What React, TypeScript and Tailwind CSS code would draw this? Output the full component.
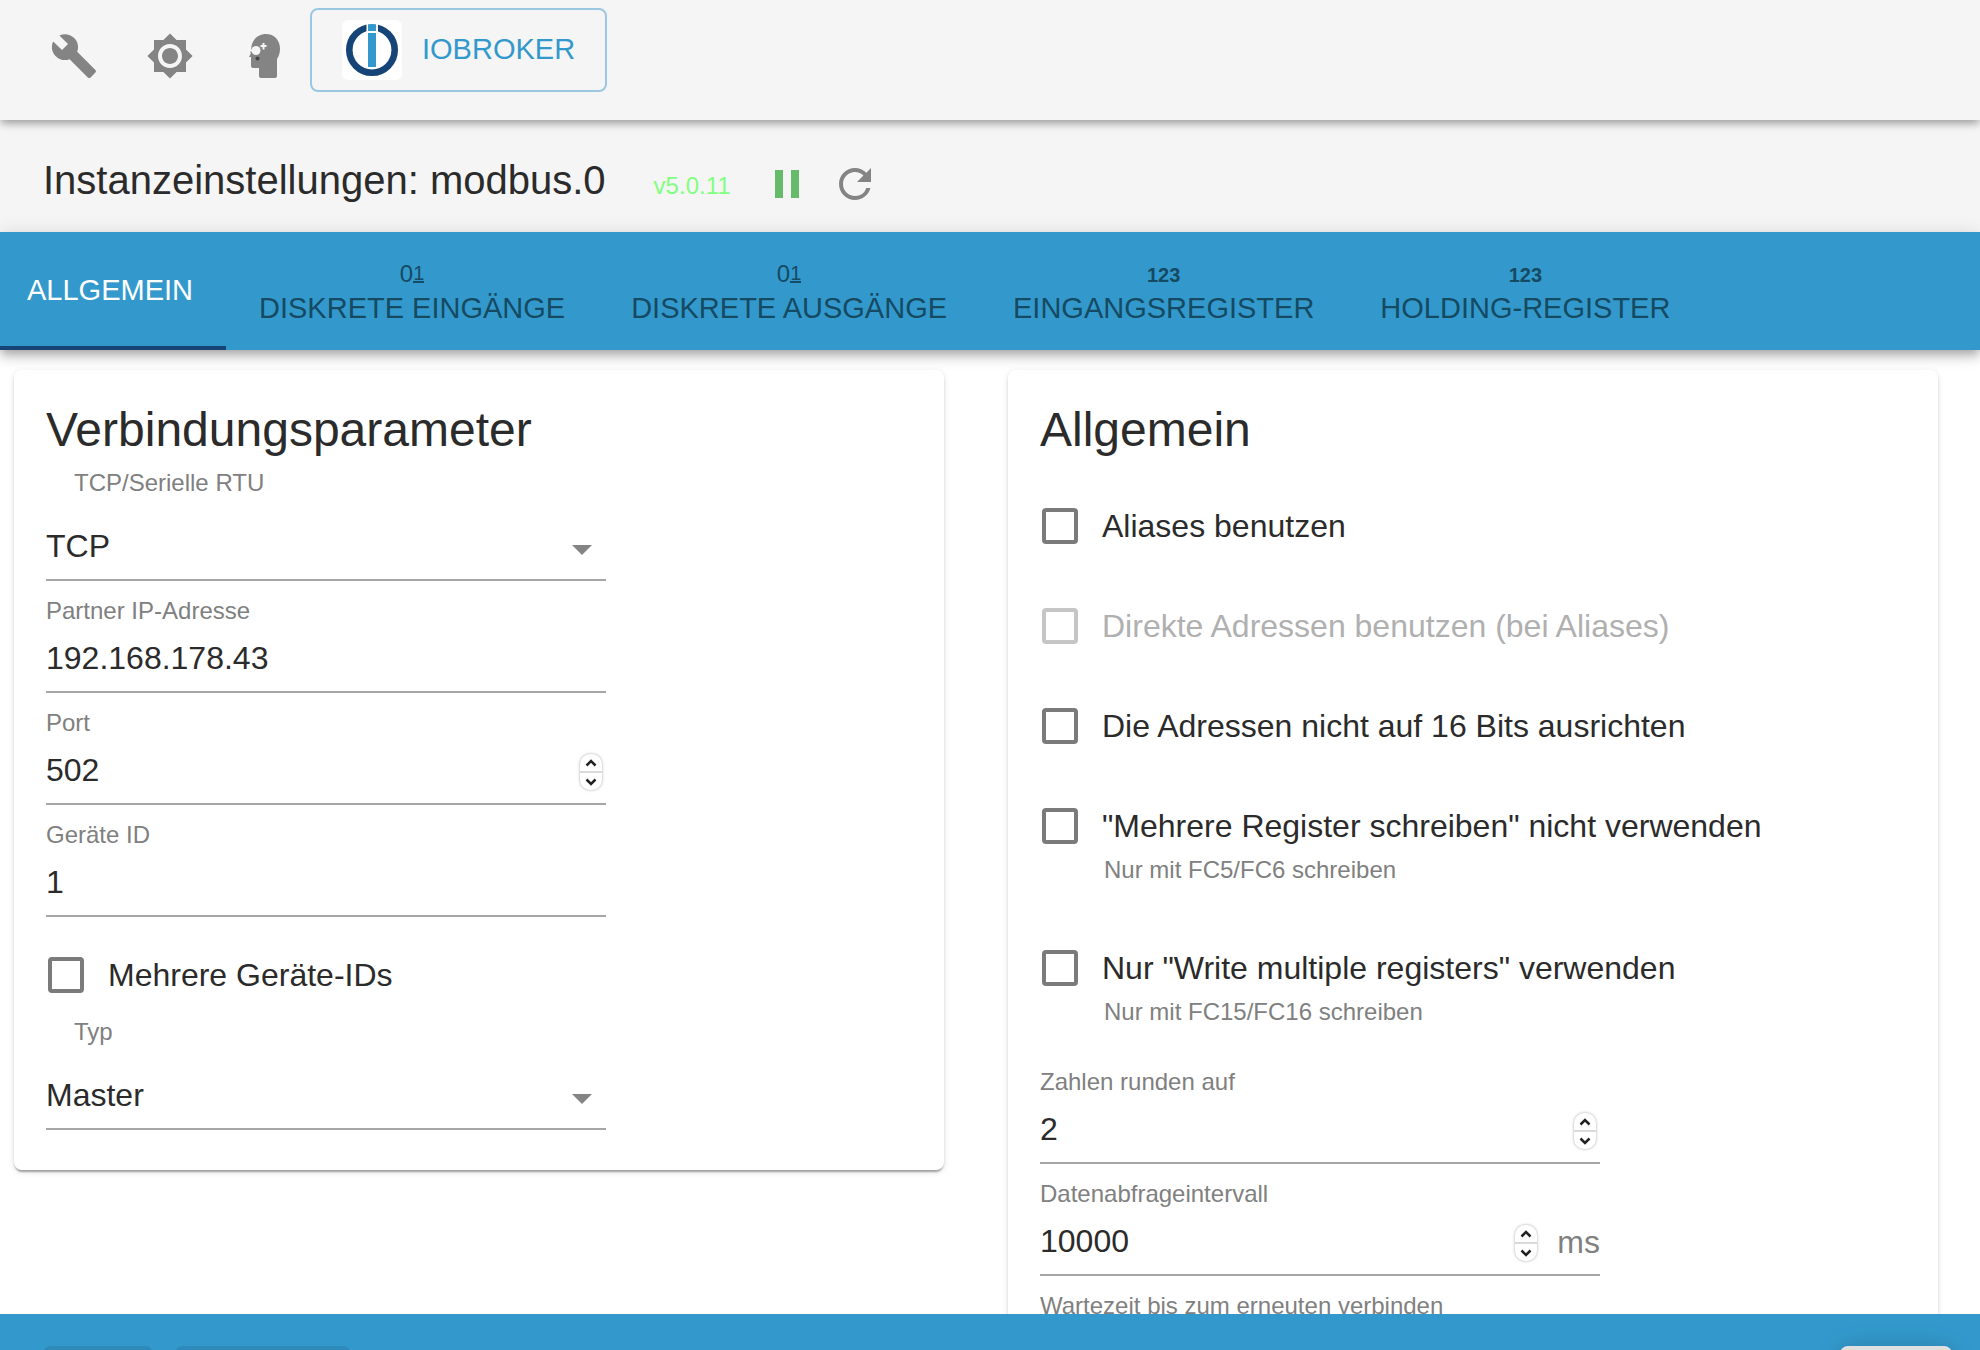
import React, { useId, useState } from 'react';
import { MdArrowDropDown, MdBrightness7, MdBuild, MdPause, MdRefresh } from 'react-icons/md';
import { clsx } from 'clsx';

const HeadIcon: React.FC = () => (
  <svg viewBox="0 0 48 48" className="w-12 h-12">
    <path
      fill="currentColor"
      d="M24 2C15.500 2 10 8 9.300 15.500L9.300 17L8 20L9 21L7 25H9V34Q9 36 11 36H17V44Q17 46 19 46H33Q35 46 35 44V27C37 24 38 20.500 38 16.500C38 8 32 2 24 2Z"
    />
    <circle cx="14" cy="18.500" r="4.500" fill="#f5f5f5" />
    <path d="M8 17.500h4v2H8z" fill="#f5f5f5" />
    <path d="M20.500 11h2v2h2v2h-2v2.500h-2V15h-2v-2h2z" fill="#f5f5f5" />
    <circle cx="15.500" cy="26.500" r="2" fill="#444444" />
  </svg>
);

const Logo: React.FC = () => (
  <svg viewBox="0 0 60 60" className="w-15 h-15 rounded-md bg-white">
    <circle cx="30" cy="30" r="22.700" fill="none" stroke="#164477" strokeWidth="6.600" />
    <path d="M24.500 2h11.500v10h-11.500z" fill="#ffffff" />
    <path d="M26 4.300q4 -.6 8 0v6.700h-8zM26 13h8v34h-8z" fill="#3399cc" />
  </svg>
);

const BinaryIcon: React.FC = () => (
  <span className="flex h-8 items-center justify-center text-2xl">
    0<span className="border-b-2 border-current text-xl leading-4">1</span>
  </span>
);

const NumberIcon: React.FC = () => (
  <span className="flex h-8 items-center justify-center pt-0.5 text-xl font-bold">123</span>
);

const TABS = [
  { label: 'ALLGEMEIN' },
  { label: 'DISKRETE EINGÄNGE', icon: <BinaryIcon /> },
  { label: 'DISKRETE AUSGÄNGE', icon: <BinaryIcon /> },
  { label: 'EINGANGSREGISTER', icon: <NumberIcon /> },
  { label: 'HOLDING-REGISTER', icon: <NumberIcon /> },
];

const Card: React.FC<{ title: string; children: React.ReactNode }> = ({ title, children }) => (
  <section className="rounded-lg bg-white px-8 pt-8 pb-10 shadow-[0_4px_2px_-2px_rgba(0,0,0,0.2),0_2px_2px_rgba(0,0,0,0.14),0_2px_6px_rgba(0,0,0,0.12)]">
    <h2 className="text-5xl leading-14">{title}</h2>
    {children}
  </section>
);

const SelectField: React.FC<{ label: string; options: string[] }> = ({ label, options }) => {
  const id = useId();
  return (
    <div className="max-w-[560px] pt-[11px]">
      <label htmlFor={id} className="block pl-7 text-2xl leading-7 text-[#808080]">
        {label}
      </label>
      <div className="relative mt-4">
        <select
          id={id}
          className="block h-17 w-full appearance-none border-b-2 border-[#a6a6a6] bg-transparent text-[32px] outline-none"
        >
          {options.map((o) => (
            <option key={o}>{o}</option>
          ))}
        </select>
        <MdArrowDropDown className="pointer-events-none absolute top-3 right-0 size-12 text-[#848484]" />
      </div>
    </div>
  );
};

const Chevron: React.FC<{ down?: boolean }> = ({ down }) => (
  <svg viewBox="0 0 12 8" className={clsx('h-2 w-3', down && 'rotate-180')}>
    <path d="M1.500 6.500L6 2L10.500 6.500" fill="none" stroke="#222222" strokeWidth="2.500" />
  </svg>
);

interface TextFieldProps {
  label: string;
  value: string;
  stepper?: boolean;
  unit?: string;
}

const TextField: React.FC<TextFieldProps> = ({ label, value: initial, stepper, unit }) => {
  const id = useId();
  const [value, setValue] = useState(initial);
  return (
    <div className="max-w-[560px] pt-4">
      <label htmlFor={id} className="block text-2xl leading-7 text-[#808080]">
        {label}
      </label>
      <div className="flex h-17 items-center border-b-2 border-[#a6a6a6]">
        <input
          id={id}
          type="text"
          inputMode={stepper ? 'numeric' : undefined}
          value={value}
          onChange={(e) => setValue(e.target.value)}
          className="h-full min-w-0 flex-1 bg-transparent text-[32px] outline-none"
        />
        {stepper && (
          <div className="mt-1 mr-1 flex h-9 w-[22px] flex-col divide-y-2 divide-[#dadada] rounded-[10px] bg-white shadow-[0_0_3px_rgba(0,0,0,0.35)]">
            <button
              aria-label="Erhöhen"
              onClick={() => setValue(String(Number(value) + 1))}
              className="flex flex-1 items-center justify-center"
            >
              <Chevron />
            </button>
            <button
              aria-label="Verringern"
              onClick={() => setValue(String(Number(value) - 1))}
              className="flex flex-1 items-center justify-center"
            >
              <Chevron down />
            </button>
          </div>
        )}
        {unit && <span className="pt-0.5 pl-4 text-[32px] text-[#808080]">{unit}</span>}
      </div>
    </div>
  );
};

const CheckField: React.FC<{ label: string; help?: string; disabled?: boolean }> = ({ label, help, disabled }) => (
  <div>
    <label className={clsx('flex h-15 items-center gap-6 pl-0.5 text-[32px]', disabled && 'text-[#b0b0b0]')}>
      <input
        type="checkbox"
        disabled={disabled}
        className="size-9 shrink-0 appearance-none rounded-sm border-4 border-[#7b7b7b] checked:bg-[#3399cc] disabled:border-[#c6c6c6]"
      />
      {label}
    </label>
    {help && <p className="pb-3.5 pl-16 text-2xl leading-7 text-[#808080]">{help}</p>}
  </div>
);

export default function App() {
  const [tab, setTab] = useState(0);

  return (
    <div className="flex h-screen flex-col overflow-hidden bg-white font-['Liberation_Sans',Arial,sans-serif] text-[#2b2b2b]">
      <header className="relative z-10 flex h-30 shrink-0 items-start bg-[#f5f5f5] pt-2 pl-[50px] text-[#848484] shadow-[0_4px_8px_-2px_rgba(0,0,0,0.2),0_4px_8px_rgba(0,0,0,0.14),0_2px_12px_rgba(0,0,0,0.1)]">
        <div className="flex h-24 items-center gap-12">
          <button aria-label="Einstellungen">
            <MdBuild className="size-12" />
          </button>
          <button aria-label="Farbschema">
            <MdBrightness7 className="size-12" />
          </button>
          <button aria-label="Expertenmodus">
            <HeadIcon />
          </button>
        </div>
        <button className="ml-5 flex items-center gap-5 rounded-lg border-2 border-[#9ac8e2] px-[30px] py-2.5 text-[29px] text-[#3399cc]">
          <Logo />
          IOBROKER
        </button>
      </header>

      <div className="flex h-28 shrink-0 items-center bg-[#f5f5f5] pt-4 pl-[43px]">
        <div className="flex items-baseline gap-12 pb-2">
          <h1 className="text-[40px] leading-12">Instanzeinstellungen: modbus.0</h1>
          <span className="text-2xl text-[#80ff80]">v5.0.11</span>
        </div>
        <button aria-label="Anhalten" className="ml-8 text-[#66bb6a]">
          <MdPause className="size-12" />
        </button>
        <button aria-label="Neu starten" className="ml-5 text-[#848484]">
          <MdRefresh className="size-12" />
        </button>
      </div>

      <nav
        role="tablist"
        className="flex h-[118px] shrink-0 bg-[#3399cc] shadow-[0_4px_8px_-2px_rgba(0,0,0,0.2),0_8px_10px_rgba(0,0,0,0.14),0_2px_20px_rgba(0,0,0,0.12)]"
      >
        {TABS.map((t, i) => (
          <button
            key={t.label}
            role="tab"
            aria-selected={i === tab}
            onClick={() => setTab(i)}
            className={clsx(
              'flex flex-col items-center justify-center border-b-4 text-[29px] leading-9',
              i === 0 ? 'pt-0.5 pr-[33px] pl-[27px]' : 'px-[33px] pt-1.5',
              i === tab ? 'border-[#164477] text-white' : 'border-transparent text-[#154a63]'
            )}
          >
            {t.icon}
            {t.label}
          </button>
        ))}
      </nav>

      <main className="grid min-h-0 flex-1 grid-cols-2 items-start gap-16 overflow-hidden pt-5 pr-[42px] pl-3.5">
        <Card title="Verbindungsparameter">
          <SelectField label="TCP/Serielle RTU" options={['TCP', 'Serielle RTU']} />
          <TextField label="Partner IP-Adresse" value="192.168.178.43" />
          <TextField label="Port" value="502" stepper />
          <TextField label="Geräte ID" value="1" />
          <div className="pt-7 pb-0.5">
            <CheckField label="Mehrere Geräte-IDs" />
          </div>
          <SelectField label="Typ" options={['Master', 'Slave']} />
        </Card>

        <Card title="Allgemein">
          <div className="flex flex-col gap-10 pt-[38px] pb-3">
            <CheckField label="Aliases benutzen" />
            <CheckField label="Direkte Adressen benutzen (bei Aliases)" disabled />
            <CheckField label="Die Adressen nicht auf 16 Bits ausrichten" />
            <CheckField label={'"Mehrere Register schreiben" nicht verwenden'} help="Nur mit FC5/FC6 schreiben" />
            <CheckField label={'Nur "Write multiple registers" verwenden'} help="Nur mit FC15/FC16 schreiben" />
          </div>
          <TextField label="Zahlen runden auf" value="2" stepper />
          <TextField label="Datenabfrageintervall" value="10000" stepper unit="ms" />
          <TextField label="Wartezeit bis zum erneuten verbinden" value="60000" stepper />
        </Card>
      </main>

      <footer className="relative flex h-9 shrink-0 items-start overflow-hidden bg-[#3399cc] pt-8 pr-7 pl-[43px]">
        <button aria-label="Speichern" disabled className="h-18 w-[110px] shrink-0 rounded-lg bg-[#2d8abb]" />
        <button aria-label="Speichern und schließen" disabled className="ml-[22px] h-18 w-44 shrink-0 rounded-lg bg-[#2d8abb]" />
        <button
          aria-label="Schließen"
          className="ml-auto h-18 w-28 shrink-0 rounded-lg bg-[#e0e0e0] shadow-[0_2px_24px_rgba(0,0,0,0.2)]"
        />
      </footer>
    </div>
  );
}
